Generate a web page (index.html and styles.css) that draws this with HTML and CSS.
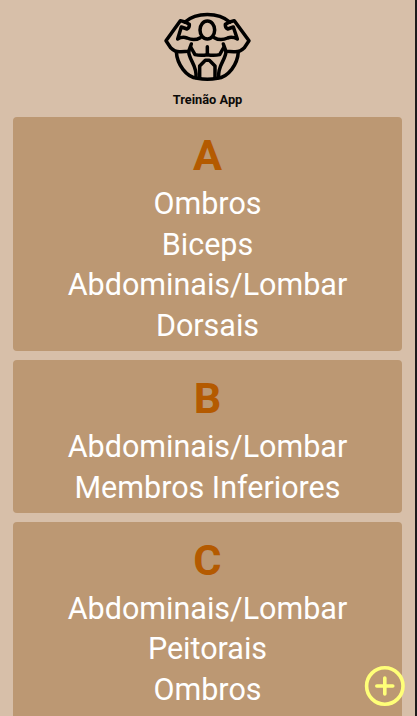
FILE: index.html
```html
<!DOCTYPE html>
<html lang="pt-BR">
<head>
<meta charset="utf-8">
<title>Treinão App</title>
<link rel="stylesheet" href="styles.css">
</head>
<body>
<div class="app">
  <header class="header">
    <svg class="logo" viewBox="0 0 315 240" aria-hidden="true">
      <path d="M90 51C124 21 190 21 224 51"/>
      <path d="M90 51L76 47L33 107L47 128Q61 142 78 140L101 139L109 117"/>
      <path d="M90 51L103 58Q104 68 96 72L79 66L68 102Q82 94 96 99Q118 109 136 98"/>
      <path d="M224 51L238 47L282 107L268 128Q254 142 236 140L213 139L205 117"/>
      <path d="M224 51L211 58Q210 68 218 72L235 66L247 102Q232 94 218 99Q196 109 178 98"/>
      <ellipse cx="157" cy="75" rx="22" ry="27"/>
      <path d="M157 125V149M107 126L120 149Q138 153 157 149Q176 153 194 149L207 126"/>
      <path d="M64 140C66 178 94 217 127 220Q157 226 187 220C220 217 248 178 250 140"/>
      <path d="M101 139C102 166 127 181 123 218M213 139C212 166 187 181 191 218"/>
      <path d="M134 218V183L151 166H163L180 183V218"/>
    </svg>
    <h1 class="title">Treinão App</h1>
  </header>
  <main class="list">
    <section class="card">
      <h2 class="letter">A</h2>
      <p class="muscle">Ombros</p>
      <p class="muscle">Biceps</p>
      <p class="muscle">Abdominais/Lombar</p>
      <p class="muscle">Dorsais</p>
    </section>
    <section class="card">
      <h2 class="letter">B</h2>
      <p class="muscle">Abdominais/Lombar</p>
      <p class="muscle">Membros Inferiores</p>
    </section>
    <section class="card card-last">
      <h2 class="letter">C</h2>
      <p class="muscle">Abdominais/Lombar</p>
      <p class="muscle">Peitorais</p>
      <p class="muscle">Ombros</p>
    </section>
  </main>
  <button class="add" aria-label="Adicionar">
    <svg viewBox="0 0 42 42"><circle cx="20.8" cy="21" r="18.2"/><path d="M20.8 13V29M12.8 21H28.8"/></svg>
  </button>
</div>
</body>
</html>
```
FILE: styles.css
```css
* { box-sizing: border-box; margin: 0; }
body {
  height: 716px;
  overflow: hidden;
  background: #d7bfa9;
  font-family: Roboto, sans-serif;
}
.app {
  position: relative;
  height: 716px;
  padding: 5px 13px 0;
  overflow: hidden;
  border-right: 2px solid #1d1b1c;
}
.header {
  display: flex;
  flex-direction: column;
  align-items: center;
  height: 112.4px;
}
.logo {
  width: 105px;
  height: 80px;
  fill: none;
  stroke: #000;
  stroke-width: 10.5;
  stroke-linecap: round;
  stroke-linejoin: round;
}
.title {
  margin-top: 6px;
  font-size: 12.8px;
  line-height: 18px;
  font-weight: 700;
  color: #0c0a08;
}
.list {
  display: flex;
  flex-direction: column;
  gap: 8.7px;
}
.card {
  padding: 12px 0 4.9px;
  border-radius: 4px;
  background: #bc9873;
  text-align: center;
}
.card-last {
  padding-bottom: 20px;
}
.letter {
  font-size: 43.2px;
  line-height: 54.8px;
  font-weight: 700;
  color: #b45a00;
}
.muscle {
  font-size: 30.5px;
  line-height: 40.6px;
  color: #fff;
}
.add {
  position: absolute;
  left: 364px;
  top: 665px;
  width: 42px;
  height: 42px;
  padding: 0;
  border: 0;
  background: none;
}
.add svg {
  display: block;
  fill: none;
  stroke: #ffff78;
  stroke-width: 3.6;
  stroke-linecap: round;
}
```
